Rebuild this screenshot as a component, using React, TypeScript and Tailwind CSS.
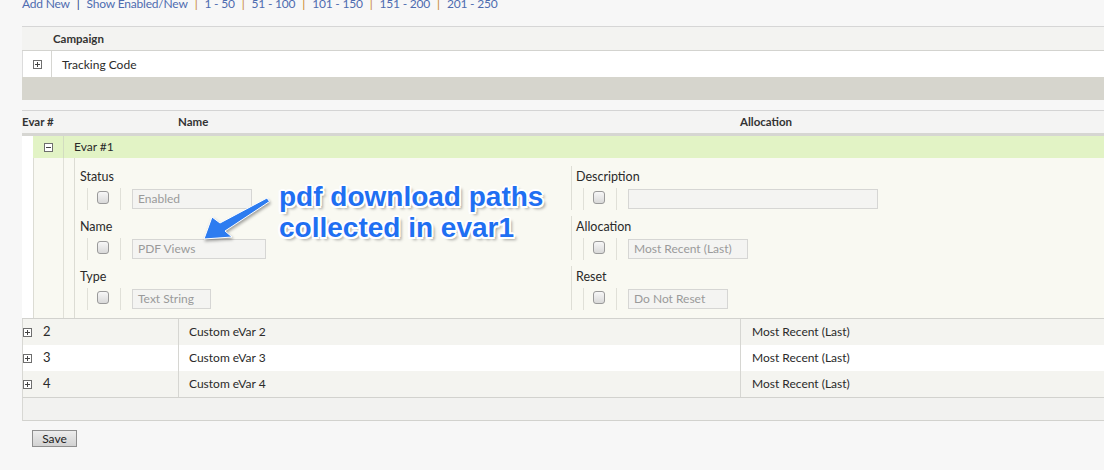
import React from "react";

function Box({ minus = false }: { minus?: boolean }) {
  return (
    <svg width="9" height="9" viewBox="0 0 9 9" className="block shrink-0">
      <rect x="0.5" y="0.5" width="8" height="8" fill="#fff" stroke="#6e6e6e" />
      <line x1="2" y1="4.5" x2="7" y2="4.5" stroke="#444" />
      {!minus && <line x1="4.5" y1="2" x2="4.5" y2="7" stroke="#444" />}
    </svg>
  );
}

function Check() {
  return (
    <span className="block w-[12px] h-[13px] -mt-[3px] rounded-[3px] border border-[#9a9a9a] bg-linear-to-b from-[#f7f7f7] to-[#d9d9d9]" />
  );
}

function Field({
  label,
  value,
  w,
  bordered,
}: {
  label: string;
  value: string;
  w: string;
  bordered?: boolean;
}) {
  return (
    <div className={`h-[44px] flex flex-col ${bordered ? "border-l border-[#deded6]" : "pl-px"}`}>
      <div className="h-[21px] leading-[21px] pl-[4px] text-[12.5px] text-[#2a2a2a]">{label}</div>
      <div className="h-[23px] flex items-center">
        <span className="ml-[11px] w-px h-[22px] bg-[#e0e0d8]" />
        <span className="w-[9px]" />
        <Check />
        <span className="w-[11px]" />
        <span className="w-px h-[22px] bg-[#e0e0d8]" />
        <span className="w-[11px]" />
        <div
          className={`${w} h-[20px] border border-[#d6d6d4] bg-[#f4f4f2] text-[#9a9a9a] text-[12px] leading-[18px] px-[5px] whitespace-nowrap overflow-hidden`}
        >
          {value}
        </div>
      </div>
    </div>
  );
}

function Sep({ c }: { c: string }) {
  return <span className={`mx-[7px] ${c}`}>|</span>;
}

export default function App() {
  const rows = [
    { n: "2", name: "Custom eVar 2", bg: "bg-[#f4f4f0]" },
    { n: "3", name: "Custom eVar 3", bg: "bg-white" },
    { n: "4", name: "Custom eVar 4", bg: "bg-[#f4f4f0]" },
  ];
  return (
    <div className="relative w-[1104px] h-[470px] overflow-hidden bg-[#f7f7f7] font-[Lato,sans-serif] text-[12px] text-[#2a2a2a]">
      <div className="pl-[22px]">
        {/* top links */}
        <div className="-mt-[4px] h-[16px] leading-[16px] text-[12px] tracking-[-0.2px] flex items-center whitespace-nowrap text-[#4e6cb0]">
          <span>Add New</span>
          <Sep c="text-[#2d437f]" />
          <span>Show Enabled/New</span>
          <Sep c="text-[#c8862a]" />
          <span>1 - 50</span>
          <Sep c="text-[#c8862a]" />
          <span>51 - 100</span>
          <Sep c="text-[#c8862a]" />
          <span>101 - 150</span>
          <Sep c="text-[#c8862a]" />
          <span>151 - 200</span>
          <Sep c="text-[#c8862a]" />
          <span>201 - 250</span>
        </div>

        {/* campaign table */}
        <div className="mt-[14px] border-t border-[#d6d6d6]">
          <div className="h-[24px] bg-[#f3f3f1] border-b border-[#d3d3cf] flex items-center pl-[31px] font-bold text-[11.5px] text-[#333]">
            Campaign
          </div>
          <div className="h-[26px] bg-white border-l border-[#dcdcdc] flex">
            <div className="w-[29px] flex items-center justify-center border-r border-[#d6d6d2]">
              <Box />
            </div>
            <div className="pl-[10px] flex items-center pt-[1px]">Tracking Code</div>
          </div>
          <div className="h-[23px] bg-[#d6d5cd]" />
        </div>

        {/* evar table */}
        <div className="mt-[10px] border-t border-[#d4d4d4]">
          <div className="h-[25px] bg-[#f4f4f3] border-b-[3px] border-[#d6d6d2] flex items-center font-bold text-[11.5px] text-[#333]">
            <div className="w-[156px]">Evar #</div>
            <div className="w-[562px]">Name</div>
            <div>Allocation</div>
          </div>

          {/* expanded row */}
          <div className="h-[22px] flex">
            <div className="w-[11px] bg-white" />
            <div className="flex-1 flex bg-[#e2f3c5]">
              <div className="w-[30px] flex items-center justify-center">
                <Box minus />
              </div>
              <div className="border-l border-[#d2dcc0] pl-[10px] flex items-center">Evar #1</div>
            </div>
          </div>

          <div className="flex border-b border-[#d2d2ce]">
            <div className="w-[11px] bg-white" />
            <div className="flex-1 flex bg-[#f9f9f2] border-l border-[#dcdcd4]">
              <div className="w-[29px]" />
              <div className="w-[11px] border-l border-[#e0e0d8]" />
              <div className="w-[497px] border-l border-[#dcdcd4] pt-[8px] pb-[8px] flex flex-col gap-[6px]">
                <Field label="Status" value="Enabled" w="w-[120px]" />
                <Field label="Name" value="PDF Views" w="w-[134px]" />
                <Field label="Type" value="Text String" w="w-[79px]" />
              </div>
              <div className="flex-1 pt-[8px] pb-[8px] flex flex-col gap-[6px]">
                <Field label="Description" value="" w="w-[250px]" bordered />
                <Field label="Allocation" value="Most Recent (Last)" w="w-[120px]" bordered />
                <Field label="Reset" value="Do Not Reset" w="w-[100px]" bordered />
              </div>
            </div>
          </div>

          {rows.map((r) => (
            <div key={r.n} className={`h-[26px] flex border-l border-[#d8d8d4] ${r.bg}`}>
              <div className="w-[155px] flex items-center">
                <Box />
                <span className="ml-[11px] text-[13px]">{r.n}</span>
              </div>
              <div className="w-[562px] border-l border-[#d6d6d2] pl-[10px] flex items-center">{r.name}</div>
              <div className="flex-1 border-l border-[#d6d6d2] pl-[11px] flex items-center">Most Recent (Last)</div>
            </div>
          ))}
          <div className="h-[24px] bg-[#f2f2f0] border-t border-b border-[#d2d2ce] border-l border-l-[#d8d8d4]" />
        </div>

        <button className="mt-[9px] ml-[10px] w-[45px] h-[17px] border border-[#8e8e8e] bg-linear-to-b from-[#ededed] to-[#d2d2d2] text-[12px] leading-[15px] text-[#222] font-[Lato,sans-serif]">
          Save
        </button>
      </div>

      {/* annotation */}
      <svg
        className="absolute left-[200px] top-[190px] [filter:drop-shadow(1px_2px_1.5px_rgba(0,0,0,0.35))]"
        width="80"
        height="60"
        viewBox="0 0 80 60"
      >
        <polygon
          points="4,49 12,27 20,33 67,8 69.5,11.5 25,41 32,47"
          fill="#2d7cf0"
          stroke="#ffffff"
          strokeWidth="1"
          strokeLinejoin="round"
        />
      </svg>
      <div className="absolute left-[279px] top-[181px] font-['Liberation_Sans',Arial,sans-serif] font-bold text-[28px] leading-[31px] text-[#1f6ff2] whitespace-nowrap [text-shadow:-2px_0_0_#fff,2px_0_0_#fff,0_-2px_0_#fff,0_2px_0_#fff,-1.5px_-1.5px_0_#fff,1.5px_-1.5px_0_#fff,-1.5px_1.5px_0_#fff,1.5px_1.5px_0_#fff,3px_3px_3px_rgba(0,0,0,0.35)]">
        <div>pdf download paths</div>
        <div>collected in evar1</div>
      </div>
    </div>
  );
}
